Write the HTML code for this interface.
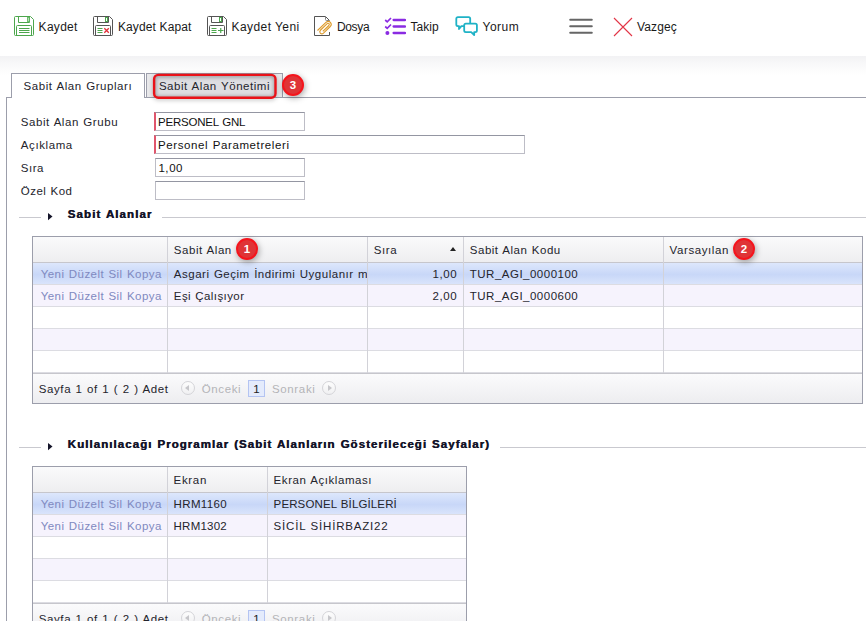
<!DOCTYPE html>
<html>
<head>
<meta charset="utf-8">
<style>
*{box-sizing:border-box;margin:0;padding:0}
html,body{width:866px;height:621px;overflow:hidden;background:#fff}
body{font-family:"Liberation Sans",sans-serif;font-size:12px;color:#1a1a1a;position:relative}
#tb{position:absolute;left:0;top:0;width:866px;height:56px;background:#fff}
#tbshadow{position:absolute;left:0;top:56px;width:866px;height:19px;background:linear-gradient(#f2f2f4,#f8f8f9 40%,#ffffff)}
.tbi{position:absolute;color:#1a1a1a;line-height:16px;white-space:nowrap}
.ico{position:absolute}
#panel{position:absolute;left:6px;top:97px;width:870px;height:540px;border-left:1px solid #9c9eab;border-top:1px solid #9c9eab;background:#fff}
#tab1{position:absolute;left:11px;top:73px;width:134px;height:25px;border:1px solid #9c9eab;border-bottom:none;background:#fff;z-index:2}
#tab2{position:absolute;left:146px;top:73px;width:137px;height:24px;border:1px solid #9c9eab;border-bottom:none;background:#e9e9eb;z-index:1}
#hlbg{position:absolute;left:154px;top:75px;width:122px;height:23px;border-radius:4px;background:#dedee2;box-shadow:inset 0 0 4px 1px rgba(0,0,0,.22);z-index:3}
#hl{position:absolute;left:148px;top:69px;z-index:5;filter:drop-shadow(0 1px 2px rgba(0,0,0,.3))}
.badge{position:absolute;width:22px;height:22px;border-radius:11px;background:#df3437;border:2px solid #f5141c;color:#fff;font-size:11.5px;font-weight:bold;text-align:center;line-height:18px;z-index:6;box-shadow:1px 2px 6px rgba(0,0,0,.35)}
.inp{position:absolute;height:19px;border:1px solid #bdbdc6;border-top-color:#9496a2;background:#fff}
.inp.req{border-left:2px solid #e0566c}
.legline{position:absolute;height:1px;background:#c9c9cf}
.tri{position:absolute;width:0;height:0;border-left:4.6px solid #15152a;border-top:3.7px solid transparent;border-bottom:3.7px solid transparent}
.sorttri{position:absolute;width:0;height:0;border-bottom:4px solid #222;border-left:3.5px solid transparent;border-right:3.5px solid transparent;z-index:4}
.grid{position:absolute;border:1px solid #9c9eab;background:#fff;overflow:hidden}
.grow{position:absolute;left:0;height:22px;width:100%;border-bottom:1px solid #dcdce2;background:#fff}
.grow.alt{background:#f6f3fd}
.grow.sel{background:linear-gradient(#dde7fc,#c8d7f8 55%,#d9e4fb)}
.ghead{position:absolute;left:0;top:0;height:26px;width:100%;background:linear-gradient(#fafafb,#eeeef0);border-bottom:1px solid #c6c6cc}
.gcol{position:absolute;top:0;width:1px;background:#d2d2d8}
.gt{position:absolute;white-space:nowrap;color:#24242c;line-height:14px;z-index:4}
.clipbox{position:absolute;overflow:hidden;z-index:4}
.lnk{color:#7f89c0}
.gfoot{position:absolute;left:0;width:100%;background:linear-gradient(#fbfbfc,#ededf0);border-top:1px solid #c6c6cc}
.dis{color:#b4b4b8}
.pgn{position:absolute;width:17px;height:17px;border:1px solid #b4c4f2;background:#e4ebfc;font-size:11.5px;text-align:center;line-height:16px;color:#222;z-index:4}
.circ{position:absolute;width:14px;height:14px;border:1px solid #d4d4d8;border-radius:7px;background:linear-gradient(#fdfdfd,#f0f0f2);z-index:4}
.circ i{position:absolute;top:3px;width:0;height:0;border-top:3px solid transparent;border-bottom:3px solid transparent}

.leg{color:#15152a;text-shadow:0.5px 0 0 #15152a}
.trisvg{position:absolute}

</style>
</head>
<body>
<div id="tb"></div>
<div id="tbshadow"></div>
<!-- Kaydet -->
<svg class="ico" style="left:14px;top:16px" width="20" height="20" viewBox="0 0 20 20" fill="none" stroke="#4da64d" stroke-width="1">
<path d="M1.5 0.5H16.5L19.5 3.5V18.5Q19.5 19.5 18.5 19.5H1.5Q0.5 19.5 0.5 18.5V1.5Q0.5 0.5 1.5 0.5Z"/>
<path d="M4.5 0.5V6.5H15.5V0.5"/>
<rect x="13.5" y="1.5" width="1.5" height="4" stroke="#6fbf6f"/>
<path d="M2.5 19.5V10.5Q2.5 9.5 3.5 9.5H16.5Q17.5 9.5 17.5 10.5V19.5"/>
<path d="M5 12.5H15.5M5 14.5H15.5M5 16.5H15.5"/>
</svg>
<!-- Kaydet Kapat -->
<svg class="ico" style="left:93px;top:16px" width="20" height="20" viewBox="0 0 20 20" fill="none" stroke="#555" stroke-width="1">
<path d="M1.5 0.5H16.5L19.5 3.5V18.5Q19.5 19.5 18.5 19.5H1.5Q0.5 19.5 0.5 18.5V1.5Q0.5 0.5 1.5 0.5Z"/>
<path d="M4.5 0.5V6.5H15.5V0.5"/>
<rect x="12.5" y="1.5" width="2" height="4" stroke="#4da64d"/>
<path d="M2.5 19.5V10.5Q2.5 9.5 3.5 9.5H16.5Q17.5 9.5 17.5 10.5V19.5"/>
<path d="M4.5 12.5H9.5M4.5 14.5H9.5M4.5 16.5H9.5" stroke="#4da64d"/>
<path d="M11.3 12.2L15.8 16.8M15.8 12.2L11.3 16.8" stroke="#e03038" stroke-width="1.3"/>
</svg>
<!-- Kaydet Yeni -->
<svg class="ico" style="left:207px;top:16px" width="20" height="20" viewBox="0 0 20 20" fill="none" stroke="#555" stroke-width="1">
<path d="M1.5 0.5H16.5L19.5 3.5V18.5Q19.5 19.5 18.5 19.5H1.5Q0.5 19.5 0.5 18.5V1.5Q0.5 0.5 1.5 0.5Z"/>
<path d="M4.5 0.5V6.5H15.5V0.5"/>
<rect x="12.5" y="1.5" width="2" height="4" stroke="#4da64d"/>
<path d="M2.5 19.5V10.5Q2.5 9.5 3.5 9.5H16.5Q17.5 9.5 17.5 10.5V19.5"/>
<path d="M4.5 12.5H9.5M4.5 14.5H9.5M4.5 16.5H9.5" stroke="#4da64d"/>
<path d="M11 14.5H16.5M13.75 12V17" stroke="#4da64d" stroke-width="1.2"/>
</svg>
<!-- Dosya -->
<svg class="ico" style="left:313px;top:15px" width="22" height="22" viewBox="0 0 22 22" fill="none" stroke="#555" stroke-width="1">
<path d="M12.5 1.5H1.5V20.5H16.5V17M16.5 5.5L12.5 1.5"/>
<path d="M12.5 1.5V4.5Q12.5 5.5 13.5 5.5H16.5" stroke="#888"/>
<g stroke="#dd9a2a" stroke-width="1.1">
<path d="M4.5 15.5L13.2 7.2Q15.4 5.4 17.4 7.3Q19.2 9.4 17.3 11.5L10.5 18.2Q8.8 19.6 7.3 18.2Q6 16.6 7.6 15L14.2 8.6Q15.2 7.8 16 8.7Q16.7 9.6 15.9 10.5L9.8 16.4"/>
</g>
</svg>
<!-- Takip -->
<svg class="ico" style="left:384px;top:15px" width="22" height="22" viewBox="0 0 22 22" fill="none" stroke="#8a2be2" stroke-width="2.3">
<path d="M9.6 5H21M9.6 11.5H21M9.6 18H21" stroke-linecap="round"/>
<path d="M1.2 5L3.2 6.8L7 3" stroke-width="1.7"/>
<path d="M1.2 11.5L3.2 13.3L7 9.5" stroke-width="1.7"/>
<circle cx="3.4" cy="18" r="2" fill="#8a2be2" stroke="none"/>
</svg>
<!-- Yorum -->
<svg class="ico" style="left:454px;top:15px" width="25" height="22" viewBox="0 0 25 22" fill="none" stroke="#1fb2c6" stroke-width="1.8" stroke-linejoin="round">
<path d="M10 11.1H7.4L5 14V11.1H3.9Q2.3 11.1 2.3 9.5V3.8Q2.3 2.2 3.9 2.2H14.6Q16.2 2.2 16.2 3.8V8"/>
<path d="M11.8 8.7H21.3Q22.9 8.7 22.9 10.3V15.5Q22.9 17.1 21.3 17.1H20.2V20L17.2 17.1H11.8Q10.2 17.1 10.2 15.5V10.3Q10.2 8.7 11.8 8.7Z" fill="#fff"/>
</svg>
<!-- Hamburger -->
<svg class="ico" style="left:569px;top:18px" width="24" height="17" viewBox="0 0 24 17" fill="none" stroke="#666" stroke-width="2" stroke-linecap="round">
<path d="M1.2 1.8H22.8M1.2 8.3H22.8M1.2 14.8H22.8"/>
</svg>
<!-- Vazgec -->
<svg class="ico" style="left:613px;top:17px" width="20" height="20" viewBox="0 0 20 20" fill="none" stroke="#e23546" stroke-width="1.1">
<path d="M1 1L19 19M19 1L1 19"/>
</svg>
<div class="tbi" style="left:38.6px;top:19px;font-size:12px;letter-spacing:0.290px;">Kaydet</div>
<div class="tbi" style="left:117.9px;top:19px;font-size:12px;letter-spacing:0.137px;">Kaydet Kapat</div>
<div class="tbi" style="left:231.6px;top:19px;font-size:12px;letter-spacing:0.419px;">Kaydet Yeni</div>
<div class="tbi" style="left:336.9px;top:19px;font-size:12px;letter-spacing:-0.323px;">Dosya</div>
<div class="tbi" style="left:410.4px;top:19px;font-size:12px;letter-spacing:0.037px;">Takip</div>
<div class="tbi" style="left:482.6px;top:19px;font-size:12px;letter-spacing:0.451px;">Yorum</div>
<div class="tbi" style="left:636.9px;top:19px;font-size:12px;letter-spacing:0.161px;">Vazgeç</div>
<div id="panel"></div>
<div id="tab1"></div>
<div id="tab2"></div>
<div id="hlbg"></div>
<div class="gt z4" style="left:23.6px;top:79px;font-size:11.5px;letter-spacing:0.562px;word-spacing:0.7px;">Sabit Alan Grupları</div>
<div class="gt z4" style="left:158.9px;top:79px;font-size:11.5px;letter-spacing:0.541px;word-spacing:0.7px;">Sabit Alan Yönetimi</div>
<svg id="hl" width="134" height="35" viewBox="0 0 134 35"><rect x="6.1" y="5.9" width="121.4" height="22.8" rx="4.2" ry="4.2" fill="none" stroke="#ea1219" stroke-width="2.4"/></svg>
<div class="badge" style="left:282px;top:74px">3</div>
<div class="gt" style="left:20.8px;top:115px;font-size:11.5px;letter-spacing:0.560px;word-spacing:0.7px;">Sabit Alan Grubu</div>
<div class="gt" style="left:20.8px;top:138px;font-size:11.5px;letter-spacing:0.589px;">Açıklama</div>
<div class="gt" style="left:20.8px;top:161px;font-size:11.5px;letter-spacing:0.527px;">Sıra</div>
<div class="gt" style="left:20.8px;top:184px;font-size:11.5px;letter-spacing:0.450px;word-spacing:0.7px;">Özel Kod</div>
<div class="inp req" style="left:154px;top:112px;width:151px"></div>
<div class="inp req" style="left:154px;top:135px;width:371px"></div>
<div class="inp" style="left:155px;top:158px;width:150px"></div>
<div class="inp" style="left:155px;top:181px;width:150px"></div>
<div class="gt" style="left:158.0px;top:115px;font-size:11.5px;letter-spacing:-0.204px;word-spacing:0.7px;color:#111;">PERSONEL GNL</div>
<div class="gt" style="left:158.0px;top:138px;font-size:11.5px;letter-spacing:0.604px;word-spacing:0.7px;color:#111;">Personel Parametreleri</div>
<div class="gt" style="left:158.4px;top:161px;font-size:11.5px;letter-spacing:0.579px;color:#111;">1,00</div>
<div class="legline" style="left:19px;top:217px;width:22px"></div>
<svg class="trisvg" style="left:48px;top:212px" width="6" height="10" viewBox="0 0 6 10"><polygon points="0,0.9 4.5,4.55 0,8.2" fill="#15152a"/></svg>
<div class="gt leg" style="left:67.6px;top:207px;font-size:11.5px;letter-spacing:1.087px;word-spacing:0.7px;font-weight:bold;">Sabit Alanlar</div>
<div class="legline" style="left:162px;top:217px;width:704px"></div>
<div class="legline" style="left:19px;top:447px;width:22px"></div>
<svg class="trisvg" style="left:48px;top:442px" width="6" height="10" viewBox="0 0 6 10"><polygon points="0,0.9 4.5,4.55 0,8.2" fill="#15152a"/></svg>
<div class="gt leg" style="left:67.6px;top:437px;font-size:11.5px;letter-spacing:1.052px;word-spacing:0.7px;font-weight:bold;">Kullanılacağı Programlar (Sabit Alanların Gösterileceği Sayfalar)</div>
<div class="legline" style="left:500px;top:447px;width:366px"></div>
<div class="grid" style="left:32px;top:236px;width:831px;height:168px">
<div class="ghead"></div>
<div class="grow sel" style="top:26px"></div>
<div class="grow alt" style="top:48px"></div>
<div class="grow" style="top:70px"></div>
<div class="grow alt" style="top:92px"></div>
<div class="grow" style="top:114px"></div>
<div class="gcol" style="left:134px;height:136px"></div>
<div class="gcol" style="left:334px;height:136px"></div>
<div class="gcol" style="left:430px;height:136px"></div>
<div class="gcol" style="left:630px;height:136px"></div>
<div class="gfoot" style="top:136px;height:30px"></div>
</div>
<div class="gt" style="left:173.8px;top:243px;font-size:11.5px;letter-spacing:0.551px;word-spacing:0.7px;">Sabit Alan</div>
<div class="gt" style="left:373.8px;top:243px;font-size:11.5px;letter-spacing:0.552px;">Sıra</div>
<div class="gt" style="left:469.8px;top:243px;font-size:11.5px;letter-spacing:0.510px;word-spacing:0.7px;">Sabit Alan Kodu</div>
<div class="gt" style="left:669.6px;top:243px;font-size:11.5px;letter-spacing:0.592px;">Varsayılan</div>
<div class="sorttri" style="left:450px;top:247px"></div>
<div class="gt lnk" style="left:40.7px;top:267px;font-size:11.5px;letter-spacing:0.451px;word-spacing:0.7px;">Yeni Düzelt Sil Kopya</div>
<div class="gt lnk" style="left:40.7px;top:289px;font-size:11.5px;letter-spacing:0.451px;word-spacing:0.7px;">Yeni Düzelt Sil Kopya</div>
<div class="clipbox" style="left:168px;top:267px;width:199px;height:16px"><div class="gt" style="left:5.8px;top:0px;font-size:11.5px;letter-spacing:0.517px;word-spacing:0.7px;">Asgari Geçim İndirimi Uygulanır mı</div>
</div>
<div class="gt" style="left:173.8px;top:289px;font-size:11.5px;letter-spacing:0.412px;word-spacing:0.7px;">Eşi Çalışıyor</div>
<div class="gt" style="left:432.6px;top:267px;font-size:11.5px;letter-spacing:0.554px;">1,00</div>
<div class="gt" style="left:432.6px;top:289px;font-size:11.5px;letter-spacing:0.554px;">2,00</div>
<div class="gt" style="left:469.8px;top:267px;font-size:11.5px;letter-spacing:0.493px;">TUR_AGI_0000100</div>
<div class="gt" style="left:469.8px;top:289px;font-size:11.5px;letter-spacing:0.493px;">TUR_AGI_0000600</div>
<div class="gt" style="left:38.8px;top:382px;font-size:11.5px;letter-spacing:0.586px;word-spacing:0.7px;">Sayfa 1 of 1 ( 2 ) Adet</div>
<div class="circ" style="left:181px;top:381px"><i style="left:3px;border-right:4px solid #c6c6ca"></i></div>
<div class="gt dis" style="left:201.8px;top:382px;font-size:11.5px;letter-spacing:0.618px;">Önceki</div>
<div class="pgn" style="left:248px;top:380px">1</div>
<div class="gt dis" style="left:271.9px;top:382px;font-size:11.5px;letter-spacing:0.672px;">Sonraki</div>
<div class="circ" style="left:322px;top:381px"><i style="left:5px;border-left:4px solid #c6c6ca"></i></div>
<div class="badge" style="left:236px;top:238px">1</div>
<div class="badge" style="left:733px;top:238px">2</div>
<div class="grid" style="left:32px;top:466px;width:435px;height:168px">
<div class="ghead"></div>
<div class="grow sel" style="top:26px"></div>
<div class="grow alt" style="top:48px"></div>
<div class="grow" style="top:70px"></div>
<div class="grow alt" style="top:92px"></div>
<div class="grow" style="top:114px"></div>
<div class="gcol" style="left:134px;height:136px"></div>
<div class="gcol" style="left:234px;height:136px"></div>
<div class="gfoot" style="top:136px;height:30px"></div>
</div>
<div class="gt" style="left:173.6px;top:473px;font-size:11.5px;letter-spacing:0.672px;">Ekran</div>
<div class="gt" style="left:273.6px;top:473px;font-size:11.5px;letter-spacing:0.560px;word-spacing:0.7px;">Ekran Açıklaması</div>
<div class="gt lnk" style="left:40.7px;top:497px;font-size:11.5px;letter-spacing:0.451px;word-spacing:0.7px;">Yeni Düzelt Sil Kopya</div>
<div class="gt lnk" style="left:40.7px;top:519px;font-size:11.5px;letter-spacing:0.451px;word-spacing:0.7px;">Yeni Düzelt Sil Kopya</div>
<div class="gt" style="left:173.6px;top:497px;font-size:11.5px;letter-spacing:0.340px;">HRM1160</div>
<div class="gt" style="left:173.6px;top:519px;font-size:11.5px;letter-spacing:0.218px;">HRM1302</div>
<div class="gt" style="left:273.6px;top:497px;font-size:11.5px;letter-spacing:0.124px;word-spacing:0.7px;">PERSONEL BİLGİLERİ</div>
<div class="gt" style="left:273.6px;top:519px;font-size:11.5px;letter-spacing:0.797px;word-spacing:0.7px;">SİCİL SİHİRBAZI22</div>
<div class="gt" style="left:38.8px;top:612px;font-size:11.5px;letter-spacing:0.586px;word-spacing:0.7px;">Sayfa 1 of 1 ( 2 ) Adet</div>
<div class="circ" style="left:181px;top:611px"><i style="left:3px;border-right:4px solid #c6c6ca"></i></div>
<div class="gt dis" style="left:201.8px;top:612px;font-size:11.5px;letter-spacing:0.618px;">Önceki</div>
<div class="pgn" style="left:248px;top:610px">1</div>
<div class="gt dis" style="left:271.9px;top:612px;font-size:11.5px;letter-spacing:0.672px;">Sonraki</div>
<div class="circ" style="left:322px;top:611px"><i style="left:5px;border-left:4px solid #c6c6ca"></i></div>

</body>
</html>
